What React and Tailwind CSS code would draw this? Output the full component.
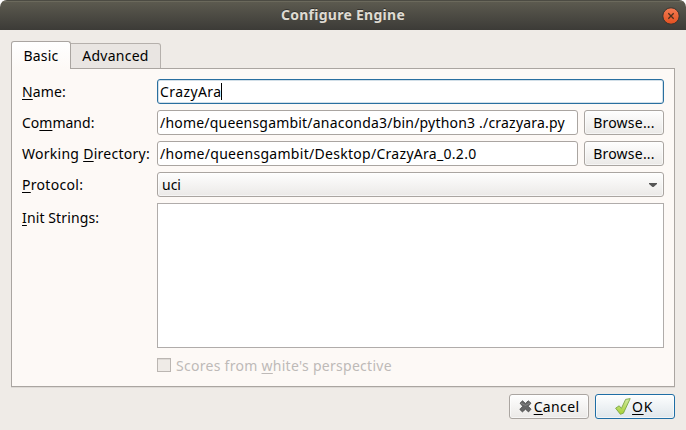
import React from 'react';

// Mnemonic letter with its underline drawn below the baseline.
function Key({ children }) {
  return (
    <span className="underline decoration-1 underline-offset-[2px] [text-decoration-skip-ink:none]">
      {children}
    </span>
  );
}

function Row({ label, top = 'h-[25px]', children }) {
  return (
    <div className="flex">
      <div className={`flex w-[135px] shrink-0 items-center whitespace-nowrap ${top}`}>{label}</div>
      <div className="flex w-[507px] gap-[6px]">{children}</div>
    </div>
  );
}

function Field({ children, className = 'border-[#aaa5a1]' }) {
  return (
    <div
      className={`flex h-[25px] flex-1 items-center overflow-hidden rounded-[3px] border bg-white px-[2px] whitespace-nowrap ${className}`}
    >
      {children}
    </div>
  );
}

function Button({ children, className = 'border-[#aaa5a1] from-[#fefefe] to-[#ebe9e7]' }) {
  return (
    <button
      className={`flex h-[25px] w-[80px] shrink-0 items-center justify-center rounded-[3px] border bg-linear-to-b whitespace-nowrap shadow-[inset_0_0_0_1px_#ffffff90] ${className}`}
    >
      {children}
    </button>
  );
}

function CancelIcon() {
  return (
    <svg width="13" height="13" viewBox="0 0 13 13" className="shrink-0">
      <path
        d="M1 3.2 3.5.8 6.4 3.4 9.3.8 12 3.2 9.2 6.2 12 9.2 9.5 11.9 6.5 9.2 3.4 11.9.8 9.4 3.7 6.3Z"
        fill="#666"
        stroke="#494949"
        strokeWidth=".8"
        strokeLinejoin="round"
      />
      <path d="M2 3.2 6.4 5.4 10.8 3.2" fill="none" stroke="#8b8b8b" strokeWidth=".8" />
    </svg>
  );
}

function OkIcon() {
  return (
    <svg width="16" height="17" viewBox="0 0 16 17" className="shrink-0">
      <defs>
        <linearGradient id="leaf" x1="0" y1="0" x2="0" y2="1">
          <stop offset="0" stopColor="#d3eba2" />
          <stop offset="1" stopColor="#a5d032" />
        </linearGradient>
      </defs>
      <path
        d="M.6 10.2 4.2 7.8 6.4 10.4 10.6 1.4 15.2.6 8.4 15.2 5.4 16.3Z"
        fill="url(#leaf)"
        stroke="#7aa545"
        strokeWidth=".9"
        strokeLinejoin="round"
      />
    </svg>
  );
}

export default function App() {
  return (
    <div className="h-[430px] w-[686px] overflow-hidden bg-white font-['Noto_Sans','Open_Sans',sans-serif] text-[14px] leading-[20px] text-black">
      <div className="flex h-full flex-col overflow-hidden rounded-t-[7px] bg-[#efebe7]">
        <header className="flex h-[30px] shrink-0 items-center border-t border-[#4c4b43] bg-linear-to-b from-[#5d5b50] to-[#3c3b37] pr-[6px] pl-[24px] shadow-[inset_0_1px_0_#6b695c]">
          <h1 className="flex-1 pb-[2px] text-center font-bold tracking-[0.27px] text-[#dfdbd2] [text-shadow:0_-1px_0_#33322e]">
            Configure Engine
          </h1>
          <svg width="18" height="18" viewBox="0 0 18 18">
            <defs>
              <linearGradient id="close" x1="0" y1="0" x2="0" y2="1">
                <stop offset="0" stopColor="#f47c54" />
                <stop offset="1" stopColor="#e2501f" />
              </linearGradient>
            </defs>
            <circle cx="9" cy="9" r="8.2" fill="url(#close)" stroke="#36342f" strokeWidth="1" />
            <path d="m6.3 6.3 5.4 5.4M11.7 6.3l-5.4 5.4" stroke="#49301f" strokeWidth="1.3" />
          </svg>
        </header>

        <div className="flex h-[39px] shrink-0 items-end pt-[11px] pl-[11px]">
          <div className="relative z-10 flex h-[28px] w-[60px] items-center justify-center rounded-t-[3px] border border-b-0 border-[#aaa5a1] bg-linear-to-b from-white to-[#fdf9f6] tracking-[0.2px]">
            Basic
          </div>
          <div className="flex h-[26px] w-[90px] items-center justify-center rounded-tr-[3px] border border-l-0 border-[#b5b0ac] bg-[#e9e5e2] tracking-[0.25px]">
            Advanced
          </div>
        </div>

        <main className="-mt-px ml-[11px] flex h-[319px] w-[664px] shrink-0 flex-col gap-[6px] border border-[#aaa5a1] bg-[#fdf9f6] pt-[10px] pl-[10px] shadow-[0_1px_0_#dedad6]">
          <Row label={<span className="tracking-[0.1px]"><Key>N</Key>ame:</span>}>
            <Field className="border-[#2a6f9f] tracking-[0.4px] shadow-[inset_0_0_0_1px_#d2dfe8]">
              <span>CrazyAra</span>
              <span className="h-[17px] w-px bg-black" />
            </Field>
          </Row>
          <Row label={<span>Co<Key>m</Key>mand:</span>}>
            <Field>
              <span className="tracking-[0.2px]">/home/queensgambit/anaconda3/bin/python3 ./crazyara.py</span>
            </Field>
            <Button><span className="tracking-[0.22px]">Browse...</span></Button>
          </Row>
          <Row label={<span className="tracking-[0.27px]">Working <Key>D</Key>irectory:</span>}>
            <Field>
              <span className="tracking-[0.29px]">/home/queensgambit/Desktop/CrazyAra_0.2.0</span>
            </Field>
            <Button><span className="tracking-[0.22px]">Browse...</span></Button>
          </Row>
          <Row label={<span className="tracking-[0.3px]"><Key>P</Key>rotocol:</span>}>
            <div className="flex h-[25px] flex-1 items-center justify-between rounded-[3px] border border-[#aaa5a1] bg-linear-to-b from-[#fefefe] to-[#ebe9e7] pr-[6px] pl-[4px] shadow-[inset_0_0_0_1px_#ffffff90]">
              <span>uci</span>
              <svg width="8" height="4" viewBox="0 0 8 4">
                <path d="M0 0h8v1L4.5 4h-1L0 1Z" fill="#555" />
              </svg>
            </div>
          </Row>
          <Row top="h-[29px]" label={<span className="tracking-[0.12px]"><Key>I</Key>nit Strings:</span>}>
            <div className="h-[145px] flex-1 border border-[#b0acaa] bg-white" />
          </Row>
          <div className="mt-[4px] ml-[135px] flex h-[14px] items-center gap-[5px] text-[#bebab8]">
            <span className="size-[14px] border border-[#bbb6b2] bg-[#efebe7] shadow-[inset_0_1px_0_#ddd9d5]" />
            <span className="pt-px tracking-[0.28px]">Scores from <Key>w</Key>hite's perspective</span>
          </div>
        </main>

        <footer className="mt-[7px] flex justify-end gap-[6px] pr-[11px]">
          <Button>
            <CancelIcon />
            <span className="ml-[2px] tracking-[0.35px]"><Key>C</Key>ancel</span>
          </Button>
          <Button className="border-[#1f6ea5] from-[#fdfefe] to-[#dfe6eb] pr-[2px] pl-0">
            <OkIcon />
            <span className="ml-px tracking-[0.6px]"><Key>O</Key>K</span>
          </Button>
        </footer>
      </div>
    </div>
  );
}
